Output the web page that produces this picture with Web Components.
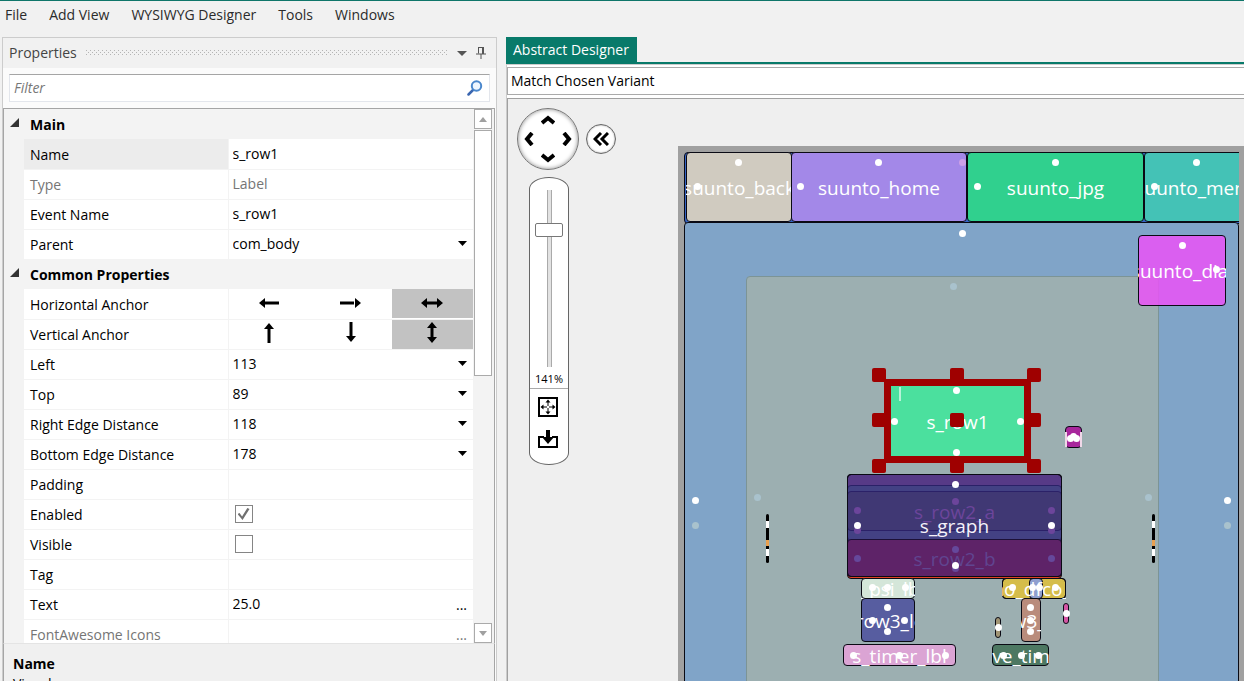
<!DOCTYPE html>
<html lang="en">
<head>
<meta charset="utf-8">
<title>Abstract Designer</title>
<style>
  html, body { margin: 0; height: 100%; }
  body { font: 14px/20px "Open Sans", "Noto Sans", sans-serif; color: #000; background: #f0f0f0; overflow: hidden; }
</style>
</head>
<body>
<app-shell>
  <menu-bar slot="menu"></menu-bar>
  <tool-panel slot="side" heading="Properties">
    <filter-box></filter-box>
    <property-grid></property-grid>
    <property-help heading="Name">Visual</property-help>
  </tool-panel>
  <designer-view slot="main"></designer-view>
</app-shell>

<script>
class Base extends HTMLElement {
  connectedCallback() {
    if (this.shadowRoot) return;
    this.attachShadow({ mode: 'open' }).innerHTML =
      '<style>*{box-sizing:border-box}button,input,select{font:inherit;color:inherit;margin:0}' + this.css() + '</style>' + this.html();
  }
  css() { return ''; }
  html() { return '<slot></slot>'; }
}

customElements.define('app-shell', class extends Base {
  css() { return `
    :host { display: flex; flex-direction: column; box-sizing: border-box; height: 100vh; border-top: 1px solid #0f766a; background: #f1f1f1; }
    main { flex: 1; min-height: 0; display: grid; grid-template-columns: 495px minmax(0, 1fr); gap: 9px; padding-left: 2px; }
    ::slotted(*) { min-height: 0; min-width: 0; }`; }
  html() { return '<slot name="menu"></slot><main><slot name="side"></slot><slot name="main"></slot></main>'; }
});

customElements.define('menu-bar', class extends Base {
  css() { return `
    :host { display: block; height: 36px; }
    nav { display: flex; gap: 22px; padding: 4px 5px; }
    button { border: 0; padding: 0; background: none; color: #2b2b2b; }`; }
  html() { return '<nav>' + ['File', 'Add View', 'WYSIWYG Designer', 'Tools', 'Windows'].map(t => `<button>${t}</button>`).join('') + '</nav>'; }
});

customElements.define('tool-panel', class extends Base {
  css() { return `
    :host { display: flex; flex-direction: column; border: 1px solid #ccc; border-bottom: 0; background: #fbfbfb; }
    header { display: flex; align-items: center; height: 30px; padding: 0 10px 0 6px; background: #f1f1f1; color: #444; gap: 9px; }
    .grip { flex: 1; height: 6px; background:
      conic-gradient(#aaa 0 0) 0 0 / 0 0,
      repeating-linear-gradient(90deg, #b4b4b4 0 1px, transparent 1px 4px) 0 0 / 100% 1px no-repeat,
      repeating-linear-gradient(90deg, transparent 0 2px, #b4b4b4 2px 3px, transparent 3px 4px) 0 2px / 100% 1px no-repeat,
      repeating-linear-gradient(90deg, #b4b4b4 0 1px, transparent 1px 4px) 0 4px / 100% 1px no-repeat; }
    button { display: flex; border: 0; padding: 0; background: none; }`; }
  html() { return `<header><span>${this.getAttribute('heading')}</span><i class="grip"></i>
    <button aria-label="Window options"><svg width="10" height="6"><path d="M0 1h10L5 6z" fill="#555"/></svg></button>
    <button aria-label="Pin"><svg width="10" height="14" fill="none" stroke="#555"><path d="M2.500 1v6.500M2 1.500h5M0 8h10M5 8v5"/><path d="M7 1v7" stroke-width="2"/></svg></button></header><slot></slot>`; }
});

customElements.define('filter-box', class extends Base {
  css() { return `
    :host { display: block; padding: 6px; }
    label { display: flex; align-items: center; height: 28px; background: #fff; border: 1px solid #e3e6ec; border-top-color: #a5a5a5; padding: 0 6px 0 4px; }
    input { flex: 1; min-width: 0; border: 0; padding: 0; background: none; outline: 0; }
    input::placeholder { color: #777; font-style: italic; opacity: 1; }`; }
  html() { return `<label><input aria-label="Filter" placeholder="Filter">
    <svg width="16" height="16" viewBox="0 0 16 16" fill="none"><path d="M1.500 14.500 6.500 9.500" stroke="#3a66b0" stroke-width="2.500" stroke-linecap="round"/><circle cx="9.500" cy="6" r="4.700" stroke="#4a87cc" stroke-width="2" fill="#eef6ff"/></svg></label>`; }
});

const arrow = {
  left: '<path d="M7 10h14"/><path d="M1 10l6-5v10z" class="f"/>',
  right: '<path d="M0 10h14"/><path d="M21 10l-6-5v10z" class="f"/>',
  hboth: '<path d="M5 10h12"/><path d="M0 10l6-5v10zM22 10l-6-5v10z" class="f"/>',
  up: '<path d="M11 5v15"/><path d="M11 0l5 6H6z" class="f"/>',
  down: '<path d="M11-1v15"/><path d="M11 19l5-6H6z" class="f"/>',
  vboth: '<path d="M11 4v12"/><path d="M11-1l5 6H6zM11 20l5-6H6z" class="f"/>'
};

customElements.define('property-grid', class extends Base {
  css() { return `
    :host { flex: 1; min-height: 0; display: flex; gap: 1px; padding-right: 2px; overflow: hidden; background: #f3f3f3; border: 1px solid #a5a5a5; border-bottom-color: #e4e4e4; margin-right: 1px; }
    .rows { flex: 1; min-width: 0; overflow: hidden; }
    table { width: 100%; border-collapse: collapse; table-layout: fixed; }
    col.g { width: 20px; } col.n { width: 204px; }
    tr { height: 30px; }
    th, td { padding: 0; height: 30px; text-align: left; font-weight: 400; }
    tr.p th { background: #fff; border: 1px solid #f3f3f3; border-width: 0 1px 1px 0; padding: 2px 0 0 6px; }
    tr.p td.v { background: #fff; border-bottom: 1px solid #f3f3f3; }
    tr.p.on th { background: #ececec; }
    tr.dim { color: #757575; }
    .cat th { font-weight: 700; padding: 1px 0 0 6px; color: #000; }
    td.g { vertical-align: top; }
    .cat button { display: block; border: 0; padding: 9px 0 0 6px; background: none; }
    .cat svg { display: block; }
    .cell { display: flex; align-items: center; height: 29px; padding: 0 6px 0 4px; position: relative; }
    input[type=text], select { flex: 1; min-width: 0; border: 0; padding: 0; background: none; outline: 0; appearance: none; height: 20px; line-height: 20px; color: inherit; opacity: 1; }
    .drop { position: absolute; right: 6px; top: 11px; pointer-events: none; }
    .more { border: 0; background: none; padding: 2px 0 0; }
    input[type=checkbox] { appearance: none; width: 18px; height: 18px; margin-left: 2px; border: 1px solid #858585; background: #fff; display: grid; place-items: center; }
    input:checked::before { content: ""; width: 12px; height: 12px; background: #707070; clip-path: polygon(0 50%, 17% 42%, 38% 70%, 82% 0, 100% 8%, 42% 100%); }
    .anchor { display: grid; grid-template-columns: repeat(3, 1fr); height: 29px; }
    .anchor button { border: 0; padding: 0 0 2px; background: none; display: grid; place-items: center; }
    .anchor button.sel { background: #c2c2c2; }
    .anchor svg { overflow: visible; stroke: #000; stroke-width: 3; } .anchor .f { stroke: none; fill: #000; }
    .bar { width: 18px; display: flex; flex-direction: column; gap: 1px; }
    .bar button { height: 20px; border: 1px solid #aaa; background: #fff; padding: 0; display: grid; place-items: center; }
    .thumb { height: 246px; border: 1px solid #aaa; background: #fff; } .gap { flex: 1; }`; }
  html() {
    const rows = [['cat', 'Main'], ['text', 'Name', 's_row1', 'on'], ['text', 'Type', 'Label', 'dim'], ['text', 'Event Name', 's_row1'], ['drop', 'Parent', 'com_body'],
      ['cat', 'Common Properties'], ['anchor', 'Horizontal Anchor', ['left', 'right', 'hboth']], ['anchor', 'Vertical Anchor', ['up', 'down', 'vboth']],
      ['drop', 'Left', '113'], ['drop', 'Top', '89'], ['drop', 'Right Edge Distance', '118'], ['drop', 'Bottom Edge Distance', '178'],
      ['text', 'Padding', ''], ['check', 'Enabled', true], ['check', 'Visible', false], ['text', 'Tag', ''], ['more', 'Text', '25.0'], ['more', 'FontAwesome Icons', '', 'dim']];
    const cell = (k, n, v, id) => ({
      text: () => `<div class="cell"><input type="text" id="${id}" value="${v}"></div>`,
      drop: () => `<div class="cell"><select id="${id}"><option>${v}</option></select><svg class="drop" width="9" height="5"><path d="M0 0h9L4.500 5z"/></svg></div>`,
      check: () => `<div class="cell"><input type="checkbox" id="${id}"${v ? ' checked' : ''}></div>`,
      more: () => `<div class="cell"><input type="text" id="${id}" value="${v}"><button class="more" aria-label="Edit ${n}">...</button></div>`,
      anchor: () => `<div class="anchor" role="group" id="${id}" aria-label="${n}">${v.map((a, i) => `<button aria-label="${a}"${i === 2 ? ' class="sel"' : ''}><svg width="22" height="20">${arrow[a]}</svg></button>`).join('')}</div>`
    })[k]();
    return '<div class="rows"><table><colgroup><col class="g"><col class="n"><col></colgroup>' + rows.map(([k, n, v, c], i) => k === 'cat'
      ? `<tr class="cat"><td class="g"><button aria-label="Collapse ${n}"><svg width="9" height="9"><path d="M9 0v9H0z" fill="#333"/></svg></button></td><th colspan="2">${n}</th></tr>`
      : `<tr class="p ${c || ''}"><td class="g"></td><th scope="row">${k === 'anchor' ? n : `<label for="p${i}">${n}</label>`}</th><td class="v">${cell(k, n, v, 'p' + i)}</td></tr>`).join('') +
      `</table></div><div class="bar"><button aria-label="Scroll up"><svg width="8" height="5"><path d="M0 5h8L4 0z" fill="#a0a0a0"/></svg></button><i class="thumb"></i><i class="gap"></i>
      <button aria-label="Scroll down"><svg width="8" height="5"><path d="M0 0h8L4 5z" fill="#a0a0a0"/></svg></button></div>`;
  }
});

customElements.define('property-help', class extends Base {
  css() { return `
    :host { display: block; height: 37px; overflow: hidden; padding: 10px 9px 0; box-sizing: border-box; background: #f0f0f0; border: solid #a5a5a5; border-width: 0 1px; margin-right: 1px; }
    h2 { margin: 0; font-size: 14px; line-height: 20px; color: #000; } p { margin: 0; }`; }
  html() { return `<h2>${this.getAttribute('heading')}</h2><p><slot></slot></p>`; }
});

customElements.define('designer-view', class extends Base {
  css() { return `
    :host { display: flex; flex-direction: column; }
    .tabs { border-bottom: 2px solid #087a6a; display: flex; }
    .tabs button { height: 25px; border: 0; padding: 1px 8px 0 7px; background: #087a6a; color: #fff; }
    .page { flex: 1; min-height: 0; display: flex; flex-direction: column; gap: 3px; padding-top: 2px; background: #fff; border: 1px solid #ccc; border-width: 1px 0 0 1px; }
    select { height: 28px; width: 100%; appearance: none; border: 1px solid #aaa; border-right: 0; border-radius: 0; padding: 0 3px 1px; background: #fff; color: #000; }
    .canvas { flex: 1; min-height: 0; position: relative; overflow: hidden; background: #efefef; border: 1px solid #a0a0a0; border-width: 1px 0 0 1px; }
    design-surface { position: absolute; left: 170px; top: 47px; right: 0; bottom: 0; }
    zoom-controls { position: absolute; left: 9px; top: 9px; }`; }
  html() { return `<div class="tabs"><button>Abstract Designer</button></div><div class="page">
    <select aria-label="Variant"><option>Match Chosen Variant</option></select>
    <div class="canvas"><design-surface></design-surface><zoom-controls></zoom-controls></div></div>`; }
});

customElements.define('zoom-controls', class extends Base {
  css() { return `
    :host { display: grid; grid-template-columns: 62px 30px; column-gap: 7px; row-gap: 7px; align-items: center; }
    button { border: 0; padding: 0; background: none; display: grid; place-items: center; }
    .pan { width: 62px; height: 62px; border: 1px solid #777; border-radius: 50%; background: #fff; box-shadow: inset 0 0 4px #888; display: grid; grid-template: repeat(3, 1fr) / repeat(3, 1fr); padding: 2px; }
    svg { fill: none; stroke: #000; }
    .n { grid-area: 1 / 2; } .w { grid-area: 2 / 1; } .e { grid-area: 2 / 3; } .s { grid-area: 3 / 2; }
    .back { width: 30px; height: 30px; border: 1px solid #666; border-radius: 50%; background: #fff; box-shadow: inset 0 0 2px #888; }
    .pill { justify-self: end; margin-right: 10px; width: 40px; height: 288px; border: 1px solid #666; border-radius: 20px / 12px; background: #fff; display: flex; flex-direction: column; align-items: center; padding-top: 12px; }
    input { writing-mode: vertical-lr; direction: rtl; appearance: none; width: 28px; height: 177px; background: linear-gradient(#e2e2e2, #e2e2e2) center / 3px 100% no-repeat, linear-gradient(#aaa, #aaa) center / 5px 100% no-repeat; }
    input::-webkit-slider-thumb { appearance: none; width: 28px; height: 14px; border: 1px solid #777; border-radius: 2px; background: #fff; }
    output { font-size: 11px; line-height: 14px; margin: 5px 0 2px; color: #000; }
    .tools { align-self: stretch; border-top: 1px solid #aaa; display: grid; gap: 12px; justify-items: center; padding-top: 8px; padding-right: 2px; }`; }
  html() {
    const chev = (c, d) => `<button class="${c}" aria-label="Pan ${c}"><svg width="14" height="14" stroke-width="4"><path d="${d}"/></svg></button>`;
    return `<div class="pan">${chev('n', 'M1 10l6-5 6 5')}${chev('w', 'M10 1l-5 6 5 6')}${chev('e', 'M4 1l5 6-5 6')}${chev('s', 'M1 4l6 5 6-5')}</div>
    <button class="back" aria-label="Collapse"><svg width="16" height="14" stroke-width="3"><path d="M8 1L2 7l6 6M15 1L9 7l6 6"/></svg></button>
    <div class="pill"><input type="range" aria-label="Zoom" min="0" max="100" value="80"><output>141%</output>
      <div class="tools"><button aria-label="Fit to window"><svg width="20" height="20"><path d="M1 1h18v18H1z" stroke-width="2"/><path d="M10 4v12M4 10h12" stroke-dasharray="5 2"/><path d="M10 2.500l2.500 3h-5zM10 17.500l2.500-3h-5zM2.500 10l3-2.500v5zM17.500 10l-3-2.500v5z" fill="#000" stroke="none"/></svg></button>
      <button aria-label="Import"><svg width="20" height="20"><path d="M6 8H1v10h18V8h-5" stroke-width="2"/><path d="M10 1v8" stroke-width="4"/><path d="M10 15L4 8h12z" fill="#000" stroke="none"/></svg></button></div></div>`;
  }
});

/* One view on the free canvas: a rounded box with a centred, clipped label. */
customElements.define('design-node', class extends Base {
  css() {
    const [x, y, w, h] = this.getAttribute('box').split(' ');
    return `
    :host { position: absolute; left: ${x}px; top: ${y}px; width: ${w}px; height: ${h}px; box-sizing: border-box;
      background: ${this.getAttribute('fill')}; border: 1px solid ${this.getAttribute('edge') || '#0a0a14'}; border-radius: 4px; }
    span { position: absolute; inset: -1px; display: flex; align-items: center; justify-content: center; overflow: hidden; padding-top: 1px;
      white-space: nowrap; font-size: 19px; line-height: 26px; color: ${this.getAttribute('ink') || '#fff'}; }`;
  }
  html() { return '<span><slot></slot></span>'; }
});

customElements.define('design-surface', class extends Base {
  css() { return `
    :host { display: block; background: #a0a0a0; }
    .stage { position: absolute; left: 6px; top: 6px; width: 555px; bottom: 0; overflow: hidden; }
    .stage > i { position: absolute; width: 7px; height: 7px; border-radius: 50%; }
    .sel { position: absolute; left: 200px; top: 227px; width: 147px; height: 84px; border: 7px solid #9f0000; }
    .stage > b { position: absolute; width: 14px; height: 14px; border-radius: 2px; background: #9f0000; }
    .bar { position: absolute; width: 3px; height: 49px; border-radius: 2px; background: linear-gradient(#000 7px, #fff 7px 14px, #000 14px 26px, #e8a050 26px 32px, #000 32px 35px, #fff 35px 42px, #000 42px); }
    .caret { position: absolute; left: 215px; top: 235px; width: 2px; height: 14px; background: #b8f2d8; }
    .slit { position: absolute; left: 381px; top: 280px; width: 17px; height: 15px; border: solid #f0d8e8; border-width: 0 2px; }`; }
  html() {
    const O = [684, 152];
    const N = (x, y, w, h, fill, label = '', edge = '', ink = '') =>
      `<design-node box="${x - O[0]} ${y - O[1]} ${w} ${h}" fill="${fill}" edge="${edge}" ink="${ink}">${label}</design-node>`;
    const D = (c, ...pts) => pts.map(([x, y]) => `<i style="left:${x - O[0] - 3}px;top:${y - O[1] - 3}px;background:${c}"></i>`).join('');
    const B = (x, y) => `<b style="left:${x - O[0]}px;top:${y - O[1]}px"></b>`;
    const W = '#fff', P = '#6c459b', V = '#65489b', F = '#a9c2cd';
    return '<div class="stage">' +
      N(684, 152, 560, 72, '#3565c8') +
      N(686, 152, 106, 70, '#d0cbc0', 'suunto_back') + N(791, 152, 176, 70, '#a388e8', 'suunto_home') +
      N(967, 152, 177, 70, '#30d08e', 'suunto_jpg') + N(1144, 152, 105, 70, '#44c2b6', 'suunto_menu') +
      D(W, [738, 162], [697, 186], [878, 162], [800, 186], [1055, 162], [977, 186], [1196, 162], [1154, 186]) + D('#cda0e6', [962, 162]) +
      N(684, 222, 555, 560, '#80a4c8') + D(W, [962, 233], [695, 500], [1227, 500]) + D(F, [695, 525], [1227, 525]) +
      N(746, 276, 413, 460, '#9cafb1', '', '#7c9496') + D(F, [953, 286], [757, 497], [1148, 497]) +
      N(1138, 235, 88, 71, 'rgba(234,84,247,.85)', 'suunto_dial') + D(W, [1182, 245], [1216, 269]) +
      N(885, 380, 145, 82, '#4be09e', 's_row1') + '<div class="caret"></div><div class="sel"></div>' +
      D(W, [956, 390], [894, 421], [1020, 421], [956, 452]) +
      [368, 413, 459].map(y => [872, 950, 1027].map(x => B(x, y)).join('')).join('') +
      N(1065, 426, 17, 22, '#a8269c') + '<div class="slit"></div>' + D(W, [1070, 438], [1073, 436], [1076, 438]) +
      N(847, 474, 215, 105, '#e04224') + N(847, 474, 215, 102, '#573a87') +
      N(847, 485, 215, 56, '#434184', 's_row2', '#2b2168', '#54408c') +
      N(847, 491, 215, 40, '#403874', 's_row2_a', '#2b2168', P) +
      N(847, 539, 215, 38, '#5e2368', 's_row2_b', '#1c1038', '#604590') +
      D(P, [955, 501], [857, 510], [1051, 510], [857, 530], [1051, 530]) + D(V, [955, 549], [857, 558], [1051, 558], [955, 568]) +
      N(847, 474, 215, 103, 'transparent', 's_graph', '', '#f5f2fa') + D(W, [955, 484], [857, 525], [1051, 525], [955, 565]) +
      N(861, 578, 54, 21, '#d4e6d9', 's_psi_lbl') + D(W, [872, 587], [887, 587], [905, 587]) +
      N(861, 598, 54, 44, '#575da0', 's_row3_left') + D(W, [887, 607], [872, 620], [904, 620], [887, 631]) +
      N(1002, 578, 64, 21, '#d5bd4a') + N(1029, 578, 14, 21, '#8f9fcf') + N(1002, 578, 64, 21, 'transparent', 'no_dfco_l') +
      D(W, [1012, 587], [1032, 587], [1039, 587], [1055, 587]) +
      N(1021, 598, 20, 44, '#b98c7c', 's_row3_right') + D(W, [1030, 607], [1030, 620], [1030, 631]) +
      N(995, 617, 6, 21, '#a09474') + D(W, [998, 627]) + N(1063, 603, 6, 21, '#d455a4') + D(W, [1066, 613]) +
      N(843, 644, 113, 22, '#dba4d4', 's_timer_lbl') + D(W, [853, 655], [899, 655], [945, 655]) +
      N(992, 644, 57, 22, '#4d7862', 'save_timer') + D(W, [1003, 655], [1021, 655], [1038, 655]) +
      '<div class="bar" style="left:82px;top:362px"></div><div class="bar" style="left:468px;top:362px"></div></div>';
  }
});
</script>
</body>
</html>
